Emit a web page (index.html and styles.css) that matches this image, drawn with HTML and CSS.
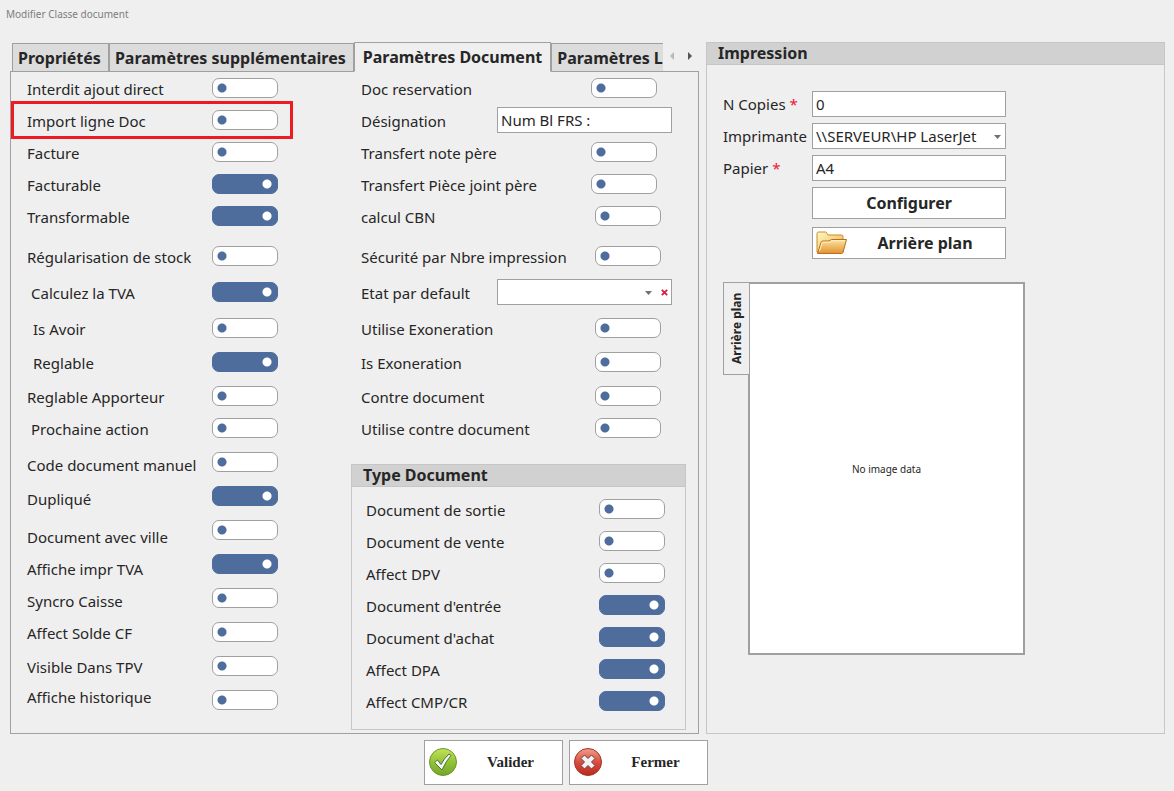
FILE: index.html
```html
<!DOCTYPE html>
<html lang="fr">
<head>
<meta charset="utf-8">
<title>Modifier Classe document</title>
<link rel="stylesheet" href="styles.css">
</head>
<body>
<h1 class="title">Modifier Classe document</h1>
<main class="window">
  <section class="main-panel">
    <div class="tabbar">
      <div class="tabs" role="tablist">
        <button class="tab" role="tab">Propriétés</button>
        <button class="tab" role="tab">Paramètres supplémentaires</button>
        <button class="tab tab-active" role="tab" aria-selected="true">Paramètres Document</button>
        <button class="tab" role="tab">Paramètres L</button>
      </div>
      <div class="tab-nav">
        <button class="arrow" aria-label="Onglet précédent" disabled><svg width="5" height="8" viewBox="0 0 5 8"><path d="M4 0v8L0 4z" fill="#b8b8b8"/></svg></button>
        <button class="arrow" aria-label="Onglet suivant"><svg width="5" height="8" viewBox="0 0 5 8"><path d="M1 0v8l4-4z" fill="#555"/></svg></button>
      </div>
    </div>
    <div class="sheet">
      <div class="options">
        <label class="row"><span>Interdit ajout direct</span><input type="checkbox" class="switch"></label>
        <label class="row row-marked"><span>Import ligne Doc</span><input type="checkbox" class="switch"></label>
        <label class="row"><span>Facture</span><input type="checkbox" class="switch"></label>
        <label class="row"><span>Facturable</span><input type="checkbox" class="switch" checked></label>
        <label class="row row-xl"><span>Transformable</span><input type="checkbox" class="switch" checked></label>
        <label class="row row-l"><span>Régularisation de stock</span><input type="checkbox" class="switch"></label>
        <label class="row row-l"><span class="indent">Calculez la TVA</span><input type="checkbox" class="switch" checked></label>
        <label class="row row-m"><span class="indent-more">Is Avoir</span><input type="checkbox" class="switch"></label>
        <label class="row row-m"><span class="indent-more">Reglable</span><input type="checkbox" class="switch" checked></label>
        <label class="row"><span>Reglable Apporteur</span><input type="checkbox" class="switch"></label>
        <label class="row row-m"><span class="indent">Prochaine action</span><input type="checkbox" class="switch"></label>
        <label class="row row-m"><span class="low">Code document manuel</span><input type="checkbox" class="switch"></label>
        <label class="row row-m"><span class="low">Dupliqué</span><input type="checkbox" class="switch" checked></label>
        <label class="row row-m"><span class="lowest">Document avec ville</span><input type="checkbox" class="switch"></label>
        <label class="row row-m"><span class="lower">Affiche impr TVA</span><input type="checkbox" class="switch" checked></label>
        <label class="row row-m"><span class="low">Syncro Caisse</span><input type="checkbox" class="switch"></label>
        <label class="row row-m"><span>Affect Solde CF</span><input type="checkbox" class="switch"></label>
        <label class="row row-s"><span>Visible Dans TPV</span><input type="checkbox" class="switch"></label>
        <label class="row"><span>Affiche historique</span><input type="checkbox" class="switch switch-low"></label>
      </div>
      <div class="side">
        <div class="options options-wide">
          <label class="row row-near"><span>Doc reservation</span><input type="checkbox" class="switch"></label>
          <div class="row row-field"><label for="designation">Désignation</label><input type="text" id="designation" class="field" value="Num Bl FRS :"></div>
          <label class="row row-near"><span>Transfert note père</span><input type="checkbox" class="switch"></label>
          <label class="row row-near"><span>Transfert Pièce joint père</span><input type="checkbox" class="switch"></label>
          <label class="row row-xl"><span>calcul CBN</span><input type="checkbox" class="switch"></label>
          <label class="row row-l"><span>Sécurité par Nbre impression</span><input type="checkbox" class="switch"></label>
          <div class="row row-l row-field"><label for="etat">Etat par default</label>
            <div class="combo">
              <select id="etat" class="field"><option></option></select>
              <svg class="caret caret-shifted" width="7" height="4" viewBox="0 0 7 4"><path d="M0 0h7L3.500 4z" fill="#707070"/></svg>
              <button class="clear" aria-label="Effacer"><svg width="7" height="7" viewBox="0 0 7 7"><path d="M.8.8l5.400 5.400M6.200.8L.8 6.200" stroke="#d4213d" stroke-width="1.800"/></svg></button>
            </div>
          </div>
          <label class="row row-m"><span>Utilise Exoneration</span><input type="checkbox" class="switch"></label>
          <label class="row row-m"><span>Is Exoneration</span><input type="checkbox" class="switch"></label>
          <label class="row"><span>Contre document</span><input type="checkbox" class="switch"></label>
          <label class="row"><span>Utilise contre document</span><input type="checkbox" class="switch"></label>
        </div>
        <section class="group">
          <h2 class="group-title">Type Document</h2>
          <div class="group-body">
            <label class="row"><span>Document de sortie</span><input type="checkbox" class="switch"></label>
            <label class="row"><span>Document de vente</span><input type="checkbox" class="switch"></label>
            <label class="row"><span>Affect DPV</span><input type="checkbox" class="switch"></label>
            <label class="row"><span>Document d'entrée</span><input type="checkbox" class="switch" checked></label>
            <label class="row"><span>Document d'achat</span><input type="checkbox" class="switch" checked></label>
            <label class="row"><span>Affect DPA</span><input type="checkbox" class="switch" checked></label>
            <label class="row"><span>Affect CMP/CR</span><input type="checkbox" class="switch" checked></label>
          </div>
        </section>
      </div>
    </div>
  </section>

  <section class="group print">
    <h2 class="group-title">Impression</h2>
    <div class="print-form">
      <label for="copies">N Copies <span class="req">*</span></label>
      <input type="text" id="copies" class="field" value="0">
      <label for="imprimante">Imprimante</label>
      <div class="combo">
        <select id="imprimante" class="field"><option>\\SERVEUR\HP LaserJet</option></select>
        <svg class="caret" width="7" height="4" viewBox="0 0 7 4"><path d="M0 0h7L3.500 4z" fill="#707070"/></svg>
      </div>
      <label for="papier">Papier <span class="req">*</span></label>
      <input type="text" id="papier" class="field" value="A4">
      <button class="button">Configurer</button>
      <button class="button button-icon">
        <svg width="32" height="24" viewBox="0 0 32 24">
          <defs>
            <linearGradient id="back" x1="0" y1="0" x2="1" y2="1"><stop offset="0" stop-color="#fffbc0"/><stop offset="1" stop-color="#e8ae4a"/></linearGradient>
            <linearGradient id="front" x1="0" y1="0" x2="0" y2="1"><stop offset="0" stop-color="#fde3a0"/><stop offset="1" stop-color="#e0932f"/></linearGradient>
          </defs>
          <path d="M1 21V2.500Q1 1 2.500 1h7Q10.500 1 11 2.500L12 4h13.500q1.500 0 1.500 1.500V21z" fill="url(#back)" stroke="#c98a2e"/>
          <path d="M1.500 22.500L5 11.500q.5-1.500 2-1.500h6l2.500-1.500h15L27 21.500q-.3 1-1.500 1z" fill="url(#front)" stroke="#bd6c1f"/>
          <path d="M3.500 20L6 12q.3-.8 1.200-.8h6.300L16 9.700h12.800" fill="none" stroke="#fff2c4"/>
        </svg>
        <span>Arrière plan</span>
      </button>
    </div>
    <div class="preview">
      <button class="preview-tab">Arrière plan</button>
      <div class="preview-image">No image data</div>
    </div>
  </section>
</main>
<footer class="actions">
  <button class="action">
    <svg width="30" height="30" viewBox="0 0 30 30">
      <defs><linearGradient id="green" x1="0" y1="0" x2="0" y2="1"><stop offset="0" stop-color="#c3e35c"/><stop offset=".5" stop-color="#93c336"/><stop offset="1" stop-color="#74a52b"/></linearGradient></defs>
      <circle cx="15" cy="14" r="13.500" fill="url(#green)" stroke="#6b9628"/>
      <path d="M6.500 14.500l3-2.500 3.500 4.500q3-6 8-10.500l2 1.500q-5 5.500-9 14.500z" fill="#f1f6fb" stroke="#50742a"/>
    </svg>
    <span>Valider</span>
  </button>
  <button class="action">
    <svg width="30" height="30" viewBox="0 0 30 30">
      <defs><linearGradient id="red" x1="0" y1="0" x2="0" y2="1"><stop offset="0" stop-color="#f0a08c"/><stop offset=".5" stop-color="#d4503f"/><stop offset="1" stop-color="#b92a20"/></linearGradient></defs>
      <circle cx="15" cy="14" r="13.500" fill="url(#red)" stroke="#a83228"/>
      <path d="M11.500 7L15 10.500 18.500 7 22 10.500 18.500 14l3.500 3.500-3.500 3.500L15 17.500 11.500 21 8 17.500l3.500-3.500L8 10.500z" fill="#eef3f8" stroke="#8e2b28" stroke-linejoin="round"/>
    </svg>
    <span>Fermer</span>
  </button>
</footer>
</body>
</html>
```
FILE: styles.css
```css
* { box-sizing: border-box; }

body {
  margin: 0;
  min-height: 100vh;
  background: #efefef;
  color: #262626;
  font: 15px/22px "Noto Sans", "DejaVu Sans Condensed", sans-serif;
}

button, input, select { font: inherit; color: inherit; }
button { padding: 0; border: 0; background: none; }

.title {
  margin: 0;
  padding: 6px 6px 0;
  font-size: 10px;
  font-weight: normal;
  line-height: 16px;
  color: #7d7d7d;
}

.window {
  display: grid;
  grid-template-columns: minmax(0, 689fr) minmax(0, 459fr);
  gap: 7px;
  padding: 20px 9px 0 10px;
}

/* Tabs */
.tabbar {
  display: flex;
  align-items: flex-end;
  height: 30px;
  margin-bottom: -1px;
  position: relative;
}
.tabs {
  display: flex;
  flex: 1;
  align-items: flex-end;
  min-width: 0;
  overflow: hidden;
  padding-left: 2px;
}
.tab {
  flex: none;
  height: 29px;
  padding: 0 7px 0 5px;
  border: 1px solid #a0a0a0;
  background: #dcdcdc;
  font-size: 16px;
  font-weight: bold;
  white-space: nowrap;
}
.tab-active {
  height: 30px;
  padding: 0 8px;
  border-bottom-color: #efefef;
  background: #efefef;
}
.tab-nav { display: flex; gap: 12px; width: 36px; padding: 0 6px 12px 7px; }
.arrow { display: flex; }

.sheet {
  display: flex;
  min-height: 663px;
  padding: 6px 12px 3px 16px;
  border: 1px solid #a0a0a0;
  justify-content: space-between;
}

/* Option rows */
.options { width: 251px; }
.side { width: 335px; }
.options-wide { width: auto; padding: 0 13px 0 10px; }
.row {
  display: flex;
  justify-content: space-between;
  align-items: flex-start;
  height: 32px;
  white-space: nowrap;
}
.row-s { height: 30px; }
.row-m { height: 34px; }
.row-l { height: 36px; }
.row-xl { height: 40px; }
.options-wide .row { padding-right: 12px; }
.options-wide .row-near { padding-right: 16px; }
.options-wide .row-field { padding-right: 1px; }
.row-field .field { width: 175px; }
.row-field > .field, .row-field > .combo { margin-top: -3px; }
.indent { padding-left: 4px; }
.indent-more { padding-left: 6px; }
.low { padding-top: 2px; }
.lower { padding-top: 4px; }
.lowest { padding-top: 6px; }

.row-marked { position: relative; }
.row-marked::before {
  content: "";
  position: absolute;
  inset: -9px -15px 3px -16px;
  border: 3px solid #ed1c24;
}

.switch {
  appearance: none;
  width: 66px;
  height: 20px;
  margin: 0;
  border: 1px solid #a0a0a0;
  border-radius: 7px;
  background: #fff radial-gradient(circle at 9px 9px, #4e6d9d 4px, transparent 5px);
}
.switch:checked {
  border-color: #4e6d9d;
  background: #4e6d9d radial-gradient(circle at 54px 9px, #fff 4px, transparent 5px);
}
.switch-low { margin-top: 4px; }

.field {
  display: block;
  appearance: none;
  width: 100%;
  height: 26px;
  padding: 0 3px 1px;
  border: 1px solid #a0a0a0;
  border-radius: 0;
  background: #fff;
}
.combo { position: relative; }
.caret { position: absolute; right: 5px; top: 12px; }
.caret-shifted { right: 20px; }
.clear { position: absolute; display: flex; right: 4px; top: 10px; }

/* Titled groups */
.group { border: 1px solid #c6c6c6; }
.side .group { margin-top: 14px; }
.group-title {
  margin: 0;
  padding: 0 11px;
  border-bottom: 1px solid #c6c6c6;
  background: #d1d1d1;
  font-size: 16px;
  line-height: 21px;
}
.group-body { padding: 12px 20px 6px 14px; }

.print-form {
  display: grid;
  grid-template-columns: 89px 194px;
  row-gap: 6px;
  align-items: center;
  padding: 26px 16px 0;
}
.req { color: #f0142f; }
.button {
  grid-column: 2;
  height: 32px;
  border: 1px solid #a0a0a0;
  background: #fff;
  font-size: 16px;
  font-weight: bold;
}
.button-icon {
  display: flex;
  align-items: center;
  margin-top: 2px;
  padding: 0 3px;
}
.button-icon span { flex: 1; }

.preview {
  display: flex;
  align-items: flex-start;
  padding: 23px 16px 0;
}
.preview-tab {
  position: relative;
  width: 27px;
  height: 93px;
  margin-right: -2px;
  border: 1px solid #a0a0a0;
  background: #efefef;
  font-size: 12px;
  font-weight: bold;
  writing-mode: vertical-rl;
  rotate: 180deg;
}
.preview-image {
  display: grid;
  place-items: center;
  width: 277px;
  height: 373px;
  border: 2px solid #a0a0a0;
  background: #fff;
  font-size: 10px;
}

/* Footer */
.actions {
  display: flex;
  justify-content: center;
  gap: 6px;
  padding: 6px 42px 6px 0;
}
.action {
  display: flex;
  align-items: center;
  width: 139px;
  height: 45px;
  padding: 0 3px;
  border: 1px solid #a0a0a0;
  background: #fff;
  font: bold 15px "Liberation Serif", serif;
}
.action span { flex: 1; padding-left: 4px; }
```
